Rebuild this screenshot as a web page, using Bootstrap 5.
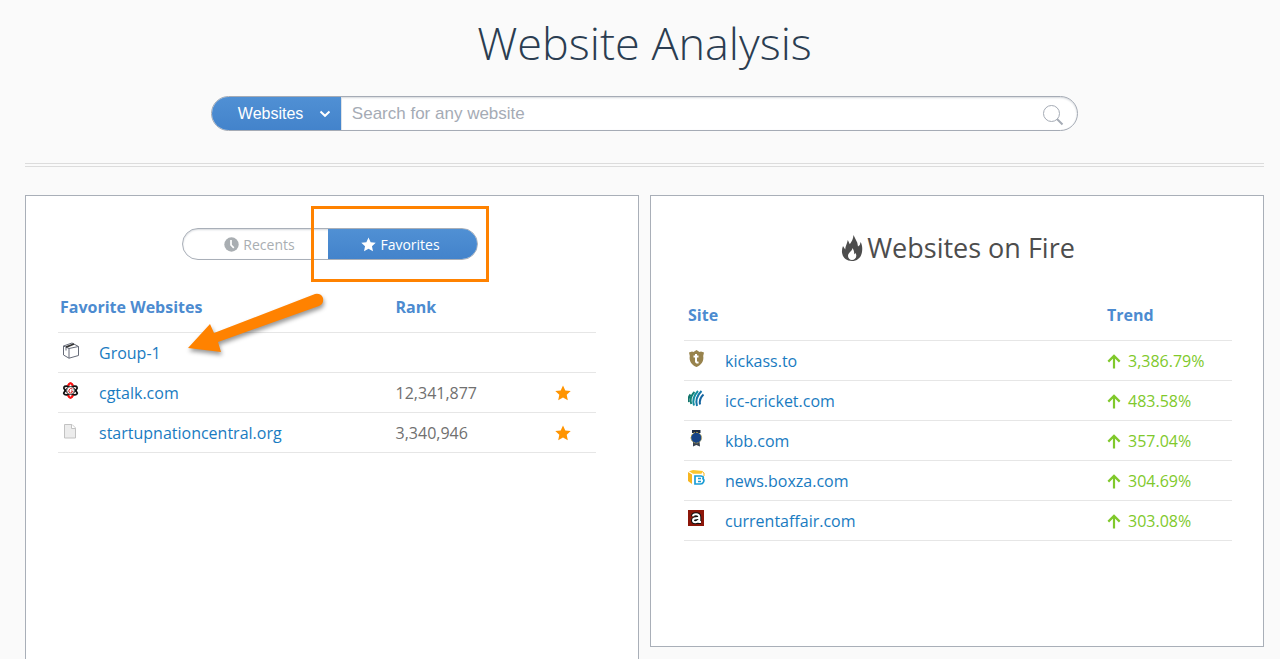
<!DOCTYPE html>
<html lang="en">
<head>
<meta charset="utf-8">
<meta name="viewport" content="width=device-width, initial-scale=1">
<title>Website Analysis</title>
<link rel="stylesheet" href="https://cdn.jsdelivr.net/npm/bootstrap@5.3.0/dist/css/bootstrap.min.css">
<style>
  body { background: #fafafa; font-family: "Open Sans", sans-serif; font-size: 16px; line-height: 24px; color: #707070; }
  svg { display: block; }
  .page { padding: 0 16px 0 25px; }
  .page-title { font-size: 45px; line-height: 64px; font-weight: 300; color: #2b3d51; margin: 11px 0 21px; }
  .finder { width: 70%; height: 35px; border: 1px solid #a5abb5; border-radius: 18px; background: #fff; box-shadow: inset 0 1px 2px #d5d8dc; font-family: "Liberation Sans", sans-serif; }
  .finder-type, .toggle-on { background: linear-gradient(#5090d4, #4383cb); color: #fff; }
  .finder-type { width: 129px; padding: 0 10px 0 26px; font-size: 16px; }
  .finder-input { font-size: 17px; padding: 0 10px; color: #555; outline: 0; }
  .finder-input::placeholder { color: #a5abb5; opacity: 1; }
  .finder-go { padding: 3px 13px 0 0; }
  .divider { border-top: 4px double #dcdcdc; margin: 32px 0 28px; }
  .panels { gap: 11px; }
  .panel { background: #fff; border: 1px solid #a9afb8; }
  .panel-favorites { padding: 32px 42px 32px 32px; }
  .panel-fire { padding: 32px 31px 105px 33px; }
  .toggle { width: 296px; height: 32px; }
  .toggle-row { padding-left: 6px; }
  .toggle-pill { border: 1px solid #a9afb8; border-radius: 16px; background: #fff; box-shadow: inset 0 1px 2px #d5d8dc; }
  .toggle-pill button { font-size: 14px; line-height: 20px; gap: 4px; padding-top: 2px; }
  .toggle-pill .toggle-off { color: #a9aeb2; padding-left: 14px; }
  .toggle-pill .toggle-on { width: 149px; padding-right: 10px; }
  .callout { top: -22px; right: -11px; width: 178px; height: 76px; border: 3px solid #ff8200; pointer-events: none; }
  .sites { table-layout: fixed; width: 100%; }
  .sites th { height: 50px; padding: 0; font-weight: 700; color: #4c8bd0; }
  .sites th:first-child { padding-left: 2px; }
  .panel-fire th:first-child { padding-left: 4px; }
  .sites td { height: 40px; padding: 2px 0 0; border-top: 1px solid #e6e6e6; }
  .sites tbody { border-bottom: 1px solid #e6e6e6; }
  .sites td:first-child svg { margin: 0 0 5px 4px; }
  .sites a { color: #197bc1; text-decoration: none; }
  .favorites { margin-top: 22px; }
  .fire-title { font-size: 27px; line-height: 40px; color: #4d4d4d; gap: 4px; margin: 0 0 22px; }
  .col-icon { width: 41px; }
  .col-rank { width: 25%; }
  .col-star { width: 66px; }
  .col-trend { width: 125px; }
  .trend { color: #80c92b; }
  .trend-value { gap: 7px; }
  .pointer { left: 160px; top: 92px; pointer-events: none; filter: drop-shadow(1px 3px 2px #0006); }
</style>
</head>
<body>
<svg width="0" height="0" class="position-absolute" aria-hidden="true">
  <symbol id="star" viewBox="0 0 16 16"><path fill="currentColor" d="M8 .5l2.300 5 5.400.6-4 3.700 1.100 5.500L8 12.600l-4.800 2.700 1.100-5.500-4-3.700 5.400-.6z"/></symbol>
  <symbol id="up" viewBox="0 0 14 15"><path fill="none" stroke="currentColor" stroke-width="2.200" d="M7 14.500V2M1.300 7.600L7 1.900l5.700 5.700"/></symbol>
</svg>
<main class="page min-vh-100 d-flex flex-column">
  <header>
    <h1 class="page-title text-center">Website Analysis</h1>
    <form class="finder d-flex mx-auto overflow-hidden">
      <button type="button" class="finder-type border-0 d-flex align-items-center justify-content-between">Websites
        <svg width="12" height="8" viewBox="0 0 12 8"><path d="M1.500 1.500L6 5.800l4.500-4.300" fill="none" stroke="#fff" stroke-width="2"/></svg>
      </button>
      <input type="text" class="finder-input flex-grow-1 border-0 bg-transparent border-start" placeholder="Search for any website" aria-label="Search for any website">
      <button type="submit" class="finder-go border-0 bg-transparent" aria-label="Search">
        <svg width="22" height="22" viewBox="0 0 22 22" fill="none" stroke="#a5abb5"><circle cx="9.500" cy="9.500" r="8"/><path d="M15 15l5.500 5.500" stroke-width="2"/></svg>
      </button>
    </form>
    <div class="divider"></div>
  </header>
  <div class="panels d-flex flex-grow-1">
    <section class="panel panel-favorites border-bottom-0 position-relative flex-fill w-50">
      <div class="toggle-row d-flex justify-content-center">
        <div class="toggle position-relative">
          <div class="toggle-pill d-flex h-100 overflow-hidden">
            <button type="button" class="toggle-off border-0 bg-transparent flex-grow-1 d-flex align-items-center justify-content-center">
              <svg width="15" height="15" viewBox="0 0 15 15"><circle cx="7.500" cy="7.500" r="7.200" fill="#a9aeb2"/><path d="M7 3v5l2.800 2.800" stroke="#fff" stroke-width="1.700" fill="none"/></svg>Recents
            </button>
            <button type="button" class="toggle-on border-0 d-flex align-items-center justify-content-center">
              <svg width="15" height="15"><use href="#star"/></svg>Favorites
            </button>
          </div>
          <div class="callout position-absolute"></div>
        </div>
      </div>
      <table class="sites favorites">
        <colgroup><col class="col-icon"><col><col class="col-rank"><col class="col-star"></colgroup>
        <thead><tr><th colspan="2">Favorite Websites</th><th>Rank</th><th></th></tr></thead>
        <tbody>
          <tr>
            <td><svg width="18" height="17" viewBox="0 0 18 17" fill="none" stroke="#666b78"><path d="M1.500 4L7 6.500v9.700L1.500 13zM7 6.500l9.500-2v9L7 16.200M1.500 4L10 1l6.500 3.500"/><path d="M4 5.200l8-3.200" stroke="#333" stroke-width="1.800"/><path d="M4 5.500v3"/></svg></td>
            <td><a href="#">Group-1</a></td><td></td><td></td>
          </tr>
          <tr>
            <td><svg width="17" height="17" viewBox="0 0 17 17" fill="none"><ellipse cx="8.500" cy="8.500" rx="3" ry="7.400" stroke="#e01515" stroke-width="1.700"/><g stroke="#111" stroke-width="1.700"><ellipse cx="8.500" cy="8.500" rx="3" ry="7.400" transform="rotate(62 8.500 8.500)"/><ellipse cx="8.500" cy="8.500" rx="3" ry="7.400" transform="rotate(-62 8.500 8.500)"/></g><circle cx="8.500" cy="8.500" r="3.800" fill="#fff" stroke="#777"/><path d="M10.500 7Q8 5.500 7 8t1.500 3q2 0 2-2H9" stroke="#d22"/><path d="M6 3.500Q8.500-.8 11 3.500M6 13.500q2.500 4.300 5 0" stroke="#f11" stroke-width="2"/></svg></td>
            <td><a href="#">cgtalk.com</a></td><td>12,341,877</td>
            <td><svg class="mx-auto" width="16" height="16" color="#ff9400"><use href="#star"/></svg></td>
          </tr>
          <tr>
            <td><svg width="16" height="16" viewBox="0 0 16 16"><path d="M2.500 1.500h7.500l3.500 3.500v10h-11z" fill="#ececec" stroke="#c2c2c2"/><path d="M9.500 1.500v4h4" fill="#fff" stroke="#c2c2c2"/></svg></td>
            <td><a href="#">startupnationcentral.org</a></td><td>3,340,946</td>
            <td><svg class="mx-auto" width="16" height="16" color="#ff9400"><use href="#star"/></svg></td>
          </tr>
        </tbody>
      </table>
      <svg class="pointer position-absolute" width="142" height="66" viewBox="0 0 142 66"><path fill="#ff8200" d="M2 60L24 36l4 9 101-39q6-1 8 4 1 6-4 8L32 54l3 10z"/></svg>
    </section>
    <section class="panel panel-fire align-self-start flex-fill w-50">
      <h2 class="fire-title d-flex justify-content-center align-items-center">
        <svg width="22" height="28" viewBox="0 0 22 28"><path fill="#4d4d4d" fill-rule="evenodd" d="M12.500 1l3.800 7.800.7 3.700 1.800-1.500.8-3c1.600 3 2 6 1.400 10-.8 5.500-4.500 9-10 9-6 0-9.500-4-10-8.500-.2-2.500.2-4.500 1-6.500l2.200 3.500C4.400 12 6 10 6.800 6l2 4.200c1.800-2.700 3.500-5 3.700-9.200zM11.500 14c0 3-4.500 4.500-4.500 8 0 2.200 1.800 4 4 4s4.300-1.800 4.300-4.300c0-1.400-.6-2.400-.9-2.800l-1.200 1.600c.2-2.500-.6-5-1.700-6.500z"/></svg>Websites on Fire
      </h2>
      <table class="sites">
        <colgroup><col class="col-icon"><col><col class="col-trend"></colgroup>
        <thead><tr><th colspan="2">Site</th><th>Trend</th></tr></thead>
        <tbody>
          <tr>
            <td><svg width="17" height="17" viewBox="0 0 17 17"><path d="M1 2.500l3-1 1.500.6L8.500 0l3 2.100 1.500-.6 3 1-.8 3.500c1 5-2 9-6.700 11C3.800 15 .8 11 1.800 6z" fill="#98834d"/><path d="M8 4v7.500q.3 1.500 2.500.8M5.500 6.500h5" fill="none" stroke="#fff" stroke-width="2"/></svg></td>
            <td><a href="#">kickass.to</a></td>
            <td class="trend"><span class="trend-value d-flex align-items-center"><svg width="14" height="15"><use href="#up"/></svg>3,386.79%</span></td>
          </tr>
          <tr>
            <td><svg width="17" height="17" viewBox="0 0 17 17" fill="none" stroke-width="2"><path d="M2.500 4.500Q-.5 8 1 12" stroke="#12756c"/><path d="M6.500 2Q1 7.500 3.300 14" stroke="#138176"/><path d="M10 1Q3.500 8 6 15.500" stroke="#148ea0"/><path d="M13.500 1Q6.500 8 9 16" stroke="#1476a8"/><path d="M15.500 4.500q-4.500 4-3.500 10" stroke="#1665a0"/></svg></td>
            <td><a href="#">icc-cricket.com</a></td>
            <td class="trend"><span class="trend-value d-flex align-items-center"><svg width="14" height="15"><use href="#up"/></svg>483.58%</span></td>
          </tr>
          <tr>
            <td><svg width="17" height="17" viewBox="0 0 17 17"><path d="M4 0h8.500v3H4z" fill="#1e2c42"/><path d="M5 11h6.500l.5 5.500L8.300 15 5 16.500z" fill="#38424f"/><circle cx="8.300" cy="7.700" r="5.300" fill="#1d4f91" stroke="#bca650" stroke-dasharray="2 1"/><circle cx="8.300" cy="7.700" r="4.700" fill="#174486"/></svg></td>
            <td><a href="#">kbb.com</a></td>
            <td class="trend"><span class="trend-value d-flex align-items-center"><svg width="14" height="15"><use href="#up"/></svg>357.04%</span></td>
          </tr>
          <tr>
            <td><svg width="17" height="17" viewBox="0 0 17 17"><path d="M0 2l4 2.500V14L0 11z" fill="#f7b51f"/><path d="M1 1.300L5 0l10 1-1.500 2.700H5z" fill="#fcc52d"/><path d="M14.500 2l1.500 1v3" fill="none" stroke="#f7b51f"/><path d="M7 6h6q3 .3 2 2.700 1.500 1 .5 3.300-.8 2-3 2H7z" fill="#fff" stroke="#1b9dd5" stroke-width="1.700"/><path d="M10 8.500h3M10 11.500h3" stroke="#1b9dd5" stroke-width="1.400"/></svg></td>
            <td><a href="#">news.boxza.com</a></td>
            <td class="trend"><span class="trend-value d-flex align-items-center"><svg width="14" height="15"><use href="#up"/></svg>304.69%</span></td>
          </tr>
          <tr>
            <td><svg width="17" height="17" viewBox="0 0 17 17"><path d="M0 0h16v16H0z" fill="#8c1609"/><path d="M5 6.300q0-2.100 3-2.100 3.300 0 3.300 2.800v5H13M10.500 8Q5 7.800 5 10.300q0 2 2.300 2 2.400 0 3.500-2" fill="none" stroke="#111" stroke-width="4"/><path d="M5 6.300q0-2.100 3-2.100 3.300 0 3.300 2.800v5H13M10.500 8Q5 7.800 5 10.300q0 2 2.300 2 2.400 0 3.500-2" fill="none" stroke="#fff" stroke-width="2"/></svg></td>
            <td><a href="#">currentaffair.com</a></td>
            <td class="trend"><span class="trend-value d-flex align-items-center"><svg width="14" height="15"><use href="#up"/></svg>303.08%</span></td>
          </tr>
        </tbody>
      </table>
    </section>
  </div>
</main>
<script src="https://cdn.jsdelivr.net/npm/bootstrap@5.3.0/dist/js/bootstrap.bundle.min.js"></script>
</body>
</html>
